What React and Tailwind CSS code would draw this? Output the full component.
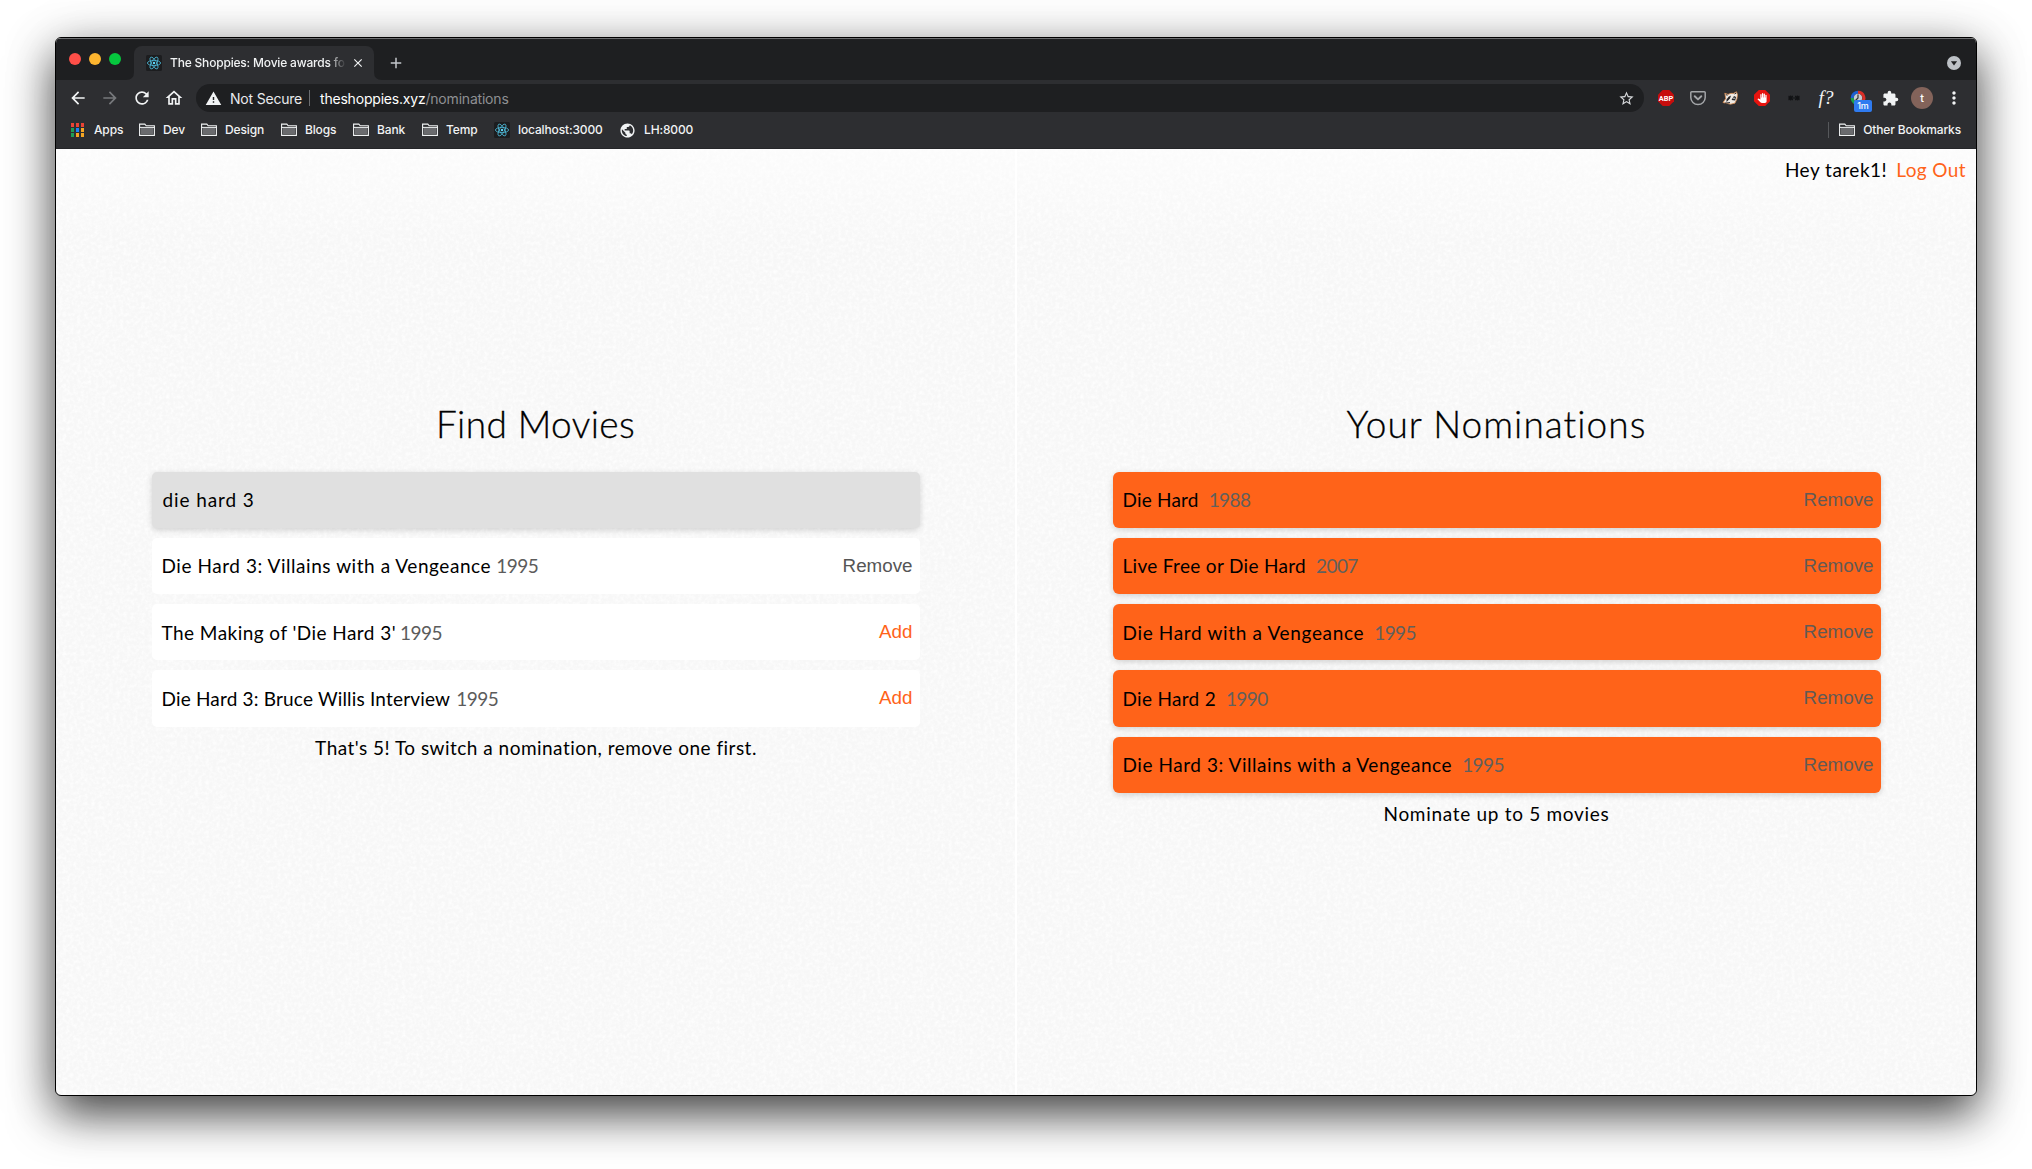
import React from "react";
import {
  MdArrowBack,
  MdArrowForward,
  MdRefresh,
  MdOutlineHome,
  MdWarning,
  MdStarBorder,
  MdExtension,
  MdMoreVert,
  MdPublic,
  MdClose,
  MdAdd,
  MdPanTool,
} from "react-icons/md";

const results = [
  { title: "Die Hard 3: Villains with a Vengeance", year: "1995", track: "tracking-[0.55px]", gap: "gap-[5px]", added: true },
  { title: "The Making of 'Die Hard 3'", year: "1995", track: "tracking-[0.45px]", gap: "gap-[4px]", added: false },
  { title: "Die Hard 3: Bruce Willis Interview", year: "1995", track: "tracking-[0.18px]", gap: "gap-[6px]", added: false },
];

const nominations = [
  { title: "Die Hard", year: "1988", track: "tracking-[0.2px]" },
  { title: "Live Free or Die Hard", year: "2007", track: "tracking-[0.32px]" },
  { title: "Die Hard with a Vengeance", year: "1995", track: "tracking-[0.66px]" },
  { title: "Die Hard 2", year: "1990", track: "tracking-[0.3px]" },
  { title: "Die Hard 3: Villains with a Vengeance", year: "1995", track: "tracking-[0.55px]" },
];

const folders = [
  { name: "Dev", width: "w-[62px]" },
  { name: "Design", width: "w-[80px]" },
  { name: "Blogs", width: "w-[72px]" },
  { name: "Bank", width: "w-[69px]" },
  { name: "Temp", width: "w-[72px]" },
];

const appColors = [
  "bg-[#ea4335]", "bg-[#ea4335]", "bg-[#ea4335]",
  "bg-[#1e9e55]", "bg-[#1a82f7]", "bg-[#f6a623]",
  "bg-[#1e9e55]", "bg-[#f6a623]", "bg-[#f6a623]",
];

function Folder() {
  return (
    <svg width="16" height="14" viewBox="0 0 16 14" className="shrink-0">
      <path d="M.6 12.4V1.1h5.2l1.4 1.7h8.2v9.6z" fill="#2d2e31" stroke="#f1f3f4" strokeWidth="1.1" />
      <path d="M1.8 5h12.4v6.3H1.8z" fill="#6a6b6e" />
      <path d="M.6 4.4h14.8" stroke="#f1f3f4" strokeWidth="1" />
    </svg>
  );
}

function ReactIcon() {
  return (
    <svg width="16" height="16" viewBox="0 0 16 16" className="shrink-0">
      <rect width="16" height="16" rx="1.5" fill="#1c1d1f" />
      <g fill="none" stroke="#4cb4d2" strokeWidth=".85">
        <ellipse cx="8" cy="8" rx="6.6" ry="2.6" />
        <ellipse cx="8" cy="8" rx="6.6" ry="2.6" transform="rotate(60 8 8)" />
        <ellipse cx="8" cy="8" rx="6.6" ry="2.6" transform="rotate(120 8 8)" />
      </g>
      <circle cx="8" cy="8" r="1.2" fill="#61dafb" />
    </svg>
  );
}

function TabStrip() {
  return (
    <div className="flex h-[41px] items-end bg-[#1e1f21]">
      <div className="flex w-[70px] items-center gap-2 self-start pt-[14px] pl-[13px]">
        <span className="size-3 shrink-0 rounded-full bg-[#ff4f48]" />
        <span className="size-3 shrink-0 rounded-full bg-[#fdb52f]" />
        <span className="size-3 shrink-0 rounded-full bg-[#06c73e]" />
      </div>
      <svg width="8" height="8" className="shrink-0">
        <path d="M0 8Q8 8 8 0V8z" fill="#2d2e31" />
      </svg>
      <div className="flex h-[34px] w-[240px] items-center rounded-t-lg bg-[#2d2e31] pl-[12px]">
        <ReactIcon />
        <div className="ml-2 w-[178px] overflow-hidden text-[12px] font-medium tracking-[-0.19px] whitespace-nowrap text-[#f1f3f4] [mask-image:linear-gradient(to_right,black_158px,transparent_176px)]">
          The Shoppies: Movie awards for
        </div>
        <MdClose className="ml-[3px] size-[14px] text-[#f1f3f4]" />
      </div>
      <svg width="8" height="8" className="shrink-0">
        <path d="M8 8Q0 8 0 0V8z" fill="#2d2e31" />
      </svg>
      <MdAdd className="mb-[8px] ml-[5px] size-[18px] text-[#c4c7cb]" />
      <div className="ml-auto flex h-[34px] items-center pr-[15px]">
        <svg width="14" height="14" viewBox="0 0 14 14">
          <circle cx="7" cy="7" r="7" fill="#bdc1c6" />
          <path d="M3.9 5.2h6.2L7 9.6z" fill="#1e1f21" />
        </svg>
      </div>
    </div>
  );
}

function Extensions() {
  return (
    <div className="flex items-center gap-4">
      <svg width="16" height="16" viewBox="0 0 16 16">
        <path d="M4.7 0h6.6L16 4.7v6.6L11.3 16H4.7L0 11.3V4.7z" fill="#c70d0d" />
        <text x="8" y="10.7" textAnchor="middle" fontSize="7.4" fontWeight="700" fill="white" fontFamily="Roboto">ABP</text>
      </svg>
      <svg width="16" height="16" viewBox="0 0 16 16" fill="none" stroke="#a3a5a8" strokeLinecap="round" strokeLinejoin="round">
        <path d="M1.7 1.7h12.6q.9 0 .9.9v4.9a7.2 7 0 0 1-14.4 0V2.6q0-.9.9-.9z" strokeWidth="1.5" />
        <path d="m4.7 6.2 3.3 3.2 3.3-3.2" strokeWidth="1.9" />
      </svg>
      <svg width="17" height="16" viewBox="0 0 17 16" className="-mr-px">
        <path d="M1 12.5 3.8 8.5 2.8 3.2 6 4.4q3-1.6 5.5-1l3-1.6 1 3-.6 4.2-2 4.2-4.400 1z" fill="#efeae4" stroke="#d98b4f" strokeWidth=".8" />
        <path d="M4.500 9.500Q6.500 5.800 9 5.500L8 8.500 4.500 12zM9.500 10l2.500-4 2 1-.8 3.500z" fill="#25262a" />
        <path d="m3.800 4.600 1.700.7M12.500 4l1.800-1M3 13.200l5-.6" stroke="#25262a" strokeWidth="1" />
        <circle cx="12" cy="8.200" r=".7" fill="white" />
      </svg>
      <div className="flex size-4 items-center justify-center bg-[#e6140f] [clip-path:polygon(30%_0,70%_0,100%_30%,100%_70%,70%_100%,30%_100%,0_70%,0_30%)]">
        <MdPanTool className="size-[10px] text-white" />
      </div>
      <svg width="16" height="16" viewBox="0 0 16 16" stroke="#111214" strokeWidth="1.1">
        <path d="M2 8h12M4.700 5.500v5M2.600 6l4.200 4M6.800 6l-4.200 4M11.300 5.500v5M9.200 6l4.200 4M13.400 6l-4.200 4" />
      </svg>
      <div className="w-4 text-center font-['Liberation_Serif'] text-[19px] leading-4 whitespace-nowrap text-[#f1f3f4] italic">f?</div>
      <div className="relative size-4">
        <svg width="16" height="16" viewBox="0 0 16 16" fill="none">
          <path d="M8 2.200a5.800 5.800 0 0 1 3.500 10.500" stroke="#db2f27" strokeWidth="3" />
          <path d="M8 2.200a5.800 5.800 0 0 0-5.800 5.800" stroke="#1d5fd0" strokeWidth="3" />
          <path d="M2.200 8a5.800 5.800 0 0 0 2.300 4.700" stroke="#18a34a" strokeWidth="3" />
          <circle cx="8" cy="8" r="4.200" fill="#c9cbd0" />
          <path d="M8 4.500V8L5.500 10.500" stroke="#333" strokeWidth="1.2" />
        </svg>
        <span className="absolute top-[10px] left-[4px] flex h-3 w-[18px] items-center justify-center rounded-[2px] bg-[#2f7bf0] text-[9px] font-medium text-white">1m</span>
      </div>
      <MdExtension className="size-[17px] text-[#f1f3f4]" />
      <div className="-ml-[4px] flex size-[22px] items-center justify-center rounded-full bg-[#83635a] text-[11px] font-medium text-white">t</div>
      <MdMoreVert className="-mr-[9px] -ml-[5px] size-[20px] text-[#f1f3f4]" />
    </div>
  );
}

function Toolbar() {
  return (
    <div className="flex h-[36px] items-center bg-[#2d2e31] pr-[21px] pl-[12px]">
      <div className="flex items-center gap-[13px] text-[#f1f3f4]">
        <MdArrowBack className="size-[20px]" />
        <MdArrowForward className="-ml-px size-[20px] text-[#76787b]" />
        <MdRefresh className="-ml-px size-[20px]" />
        <MdOutlineHome className="-ml-px size-[20px]" />
      </div>
      <div className="ml-[12px] flex h-7 w-[1448px] items-center rounded-full bg-[#1e1f21] pr-[9px] pl-[9px] text-[14px] tracking-[-0.2px]">
        <MdWarning className="size-[17px] text-[#f1f3f4]" />
        <span className="ml-[8px] w-[79px] text-[#e8eaed]">Not Secure</span>
        <span className="h-4 w-px bg-[#6b6d70]" />
        <span className="ml-[10px] text-white">theshoppies.xyz</span>
        <span className="text-[#8e9093]">/nominations</span>
        <MdStarBorder className="ml-auto size-[17px] text-[#d5d7da]" />
      </div>
      <div className="ml-auto">
        <Extensions />
      </div>
    </div>
  );
}

function Bookmarks() {
  return (
    <div className="flex h-[33px] items-center border-b border-[#252629] bg-[#2d2e31] pr-[15px] pb-[4px] pl-[15px] text-[12px] font-medium tracking-[-0.14px] text-[#f1f3f4]">
      <div className="grid grid-cols-[repeat(3,3px)] grid-rows-[repeat(3,4px)] gap-x-[2px] gap-y-px">
        {appColors.map((c, i) => (
          <span key={i} className={c} />
        ))}
      </div>
      <span className="ml-[10px] w-[45px]">Apps</span>
      {folders.map((f) => (
        <div key={f.name} className={`flex items-center gap-2 ${f.width}`}>
          <Folder />
          {f.name}
        </div>
      ))}
      <ReactIcon />
      <span className="ml-2 w-[101px]">localhost:3000</span>
      <MdPublic className="size-[17px]" />
      <span className="ml-2">LH:8000</span>
      <span className="ml-auto h-4 w-px bg-[#56585b]" />
      <span className="mr-2 ml-[10px]">
        <Folder />
      </span>
      Other Bookmarks
    </div>
  );
}

function Paper() {
  return (
    <svg className="pointer-events-none absolute inset-0 h-full w-full" aria-hidden="true">
      <filter id="paper" x="0" y="0" width="100%" height="100%">
        <feTurbulence type="fractalNoise" baseFrequency="0.28" numOctaves="3" seed="4" />
        <feColorMatrix values="0 0 0 0 1  0 0 0 0 1  0 0 0 0 1  1.7 0 0 0 -0.65" />
      </filter>
      <rect width="100%" height="100%" filter="url(#paper)" />
    </svg>
  );
}

function Find() {
  return (
    <section className="flex w-[959px] flex-col items-center pt-[253px]">
      <h1 className="h-[69.600px] text-[37px] leading-[44px] font-light tracking-[0.4px] [-webkit-text-stroke:0.3px_black]">Find Movies</h1>
      <div className="flex w-[768px] flex-col gap-[10px]">
        <div className="flex h-[56.250px] items-center rounded-[5px] bg-[#e0e0e0] px-[11px] tracking-[0.9px] shadow-[0_2px_6px_rgba(0,0,0,0.16)]">die hard 3</div>
        {results.map((m) => (
          <div key={m.title} className="flex h-[56.250px] items-center justify-between rounded-[5px] bg-white pr-[7px] pl-[10px]">
            <p className={`flex ${m.gap}`}>
              <span className={m.track}>{m.title}</span>
              <span className="tracking-[-0.5px] text-[#5c5c5c]">{m.year}</span>
            </p>
            <button className={`pb-px font-['Liberation_Sans'] text-[18.8px] ${m.added ? "text-[#555]" : "text-[#ff6319]"}`}>{m.added ? "Remove" : "Add"}</button>
          </div>
        ))}
      </div>
      <p className="mt-[7px] pl-px tracking-[0.48px]">That's 5! To switch a nomination, remove one first.</p>
    </section>
  );
}

function Nominations() {
  return (
    <section className="flex w-[959px] flex-col items-center pt-[253px]">
      <h1 className="h-[69.600px] text-[37px] leading-[44px] font-light tracking-[1.05px] [-webkit-text-stroke:0.3px_black]">Your Nominations</h1>
      <div className="flex w-[768px] flex-col gap-[10px]">
        {nominations.map((m) => (
          <div key={m.title} className="flex h-[56.250px] items-center justify-between rounded-[6px] bg-[#ff6319] pr-[7px] pl-[10px] shadow-[0_2px_6px_rgba(0,0,0,0.16)]">
            <p className="flex gap-[10px]">
              <span className={m.track}>{m.title}</span>
              <span className="tracking-[-0.6px] text-[#62605c]">{m.year}</span>
            </p>
            <button className="pb-px font-['Liberation_Sans'] text-[18.8px] text-[#625a54]">Remove</button>
          </div>
        ))}
      </div>
      <p className="mt-[7px] tracking-[0.7px]">Nominate up to 5 movies</p>
    </section>
  );
}

export default function App() {
  return (
    <div className="h-[1169px] w-[2032px] overflow-hidden bg-white pt-[37px] pl-[55px] font-['Inter',sans-serif]">
      <div className="h-[1059px] w-[1922px] overflow-hidden rounded-[6px] border border-black bg-[#f7f7f7] shadow-[0_18px_46px_rgba(0,0,0,0.72),0_4px_60px_rgba(0,0,0,0.1)]">
        <div className="border-t border-[#6e6f71]">
          <TabStrip />
          <Toolbar />
          <Bookmarks />
        </div>
        <main className="relative h-[946px] font-['Lato',sans-serif] text-[19px] leading-[27px] text-black">
          <Paper />
          <div className="relative flex h-full bg-linear-to-b from-white/60 to-transparent to-10%">
            <Find />
            <div className="w-[2px] bg-white" />
            <Nominations />
            <div className="absolute top-[7px] right-[10px] flex gap-[9px]">
              <span className="tracking-[0.5px]">Hey tarek1!</span>
              <a className="tracking-[0.4px] text-[#ff6319]">Log Out</a>
            </div>
          </div>
        </main>
      </div>
    </div>
  );
}
